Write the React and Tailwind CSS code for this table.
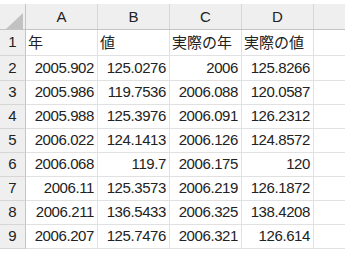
import React from 'react';

const rows = [
  ['年', '値', '実際の年', '実際の値'],
  ['2005.902', '125.0276', '2006', '125.8266'],
  ['2005.986', '119.7536', '2006.088', '120.0587'],
  ['2005.988', '125.3976', '2006.091', '126.2312'],
  ['2006.022', '124.1413', '2006.126', '124.8572'],
  ['2006.068', '119.7', '2006.175', '120'],
  ['2006.11', '125.3573', '2006.219', '126.1872'],
  ['2006.211', '136.5433', '2006.325', '138.4208'],
  ['2006.207', '125.7476', '2006.321', '126.614'],
];

const heights = ['h-[26px]', 'h-[25px]', 'h-[24px]', 'h-[24px]', 'h-[24px]', 'h-[24px]', 'h-[24px]', 'h-[24px]', 'h-[24px]'];

const grid = 'grid grid-cols-[26px_72px_72px_72px_72px_1fr]';

export default function App() {
  return (
    <div
      className="w-[345px] h-[256px] bg-white pt-[4px] overflow-hidden text-[#222]"
      style={{ fontFamily: '"Liberation Sans", "Noto Sans CJK JP", sans-serif' }}
    >
      {/* column headers */}
      <div className={`${grid} h-[26px] bg-[#efefef] border-b border-[#c4c4c4]`}>
        <div className="relative border-r border-[#c4c4c4]">
          <svg className="absolute left-[6px] top-[9px]" width="17" height="16" viewBox="0 0 17 16">
            <polygon points="17,0 17,16 0,16" fill="#c2c2c2" />
          </svg>
        </div>
        {['A', 'B', 'C', 'D'].map((c) => (
          <div key={c} className="flex items-center justify-center border-r border-[#d6d6d6] text-[15px] pt-[1px]">
            {c}
          </div>
        ))}
        <div />
      </div>

      {rows.map((r, i) => (
        <div key={i} className={`${grid} ${heights[i]}`}>
          <div className="flex items-center justify-center bg-[#efefef] border-r border-b border-r-[#c4c4c4] border-b-[#d6d6d6] text-[15px]">
            {i + 1}
          </div>
          {r.map((v, j) =>
            i === 0 ? (
              <div key={j} className="flex items-center pl-[2px] border-r border-b border-[#e1e1e1] text-[15px] whitespace-nowrap overflow-hidden" style={{ fontFamily: '"Noto Sans CJK JP", sans-serif' }}>
                {v}
              </div>
            ) : (
              <div key={j} className="flex items-center justify-end pr-[3px] border-r border-b border-[#e1e1e1] text-[15px] tracking-[-0.4px]">
                {v}
              </div>
            )
          )}
          <div className="border-b border-[#e1e1e1]" />
        </div>
      ))}
    </div>
  );
}
